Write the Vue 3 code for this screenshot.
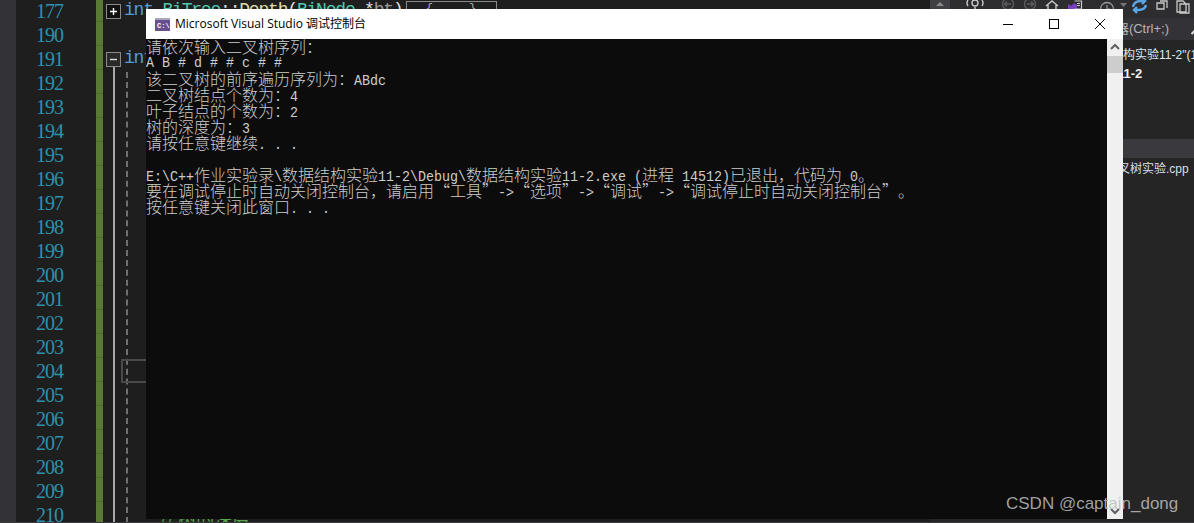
<script setup>
const numbers = [177, 190, 191, 192, 193, 194, 195, 196, 197, 198, 199, 200, 201, 202, 203, 204, 205, 206, 207, 208, 209, 210]

const code = [
  { text: 'int', cls: 'kw' },
  { text: ' ', cls: '' },
  { text: 'BiTree', cls: 'type' },
  { text: '::', cls: 'plain' },
  { text: 'Depth', cls: 'fn' },
  { text: '(', cls: 'plain' },
  { text: 'BiNode', cls: 'type' },
  { text: ' *', cls: 'plain' },
  { text: 'bt', cls: 'param' },
  { text: ')', cls: 'plain' }
]

const lines = [
  '请依次输入二叉树序列：',
  'A B # d # # c # #',
  '该二叉树的前序遍历序列为：ABdc',
  '二叉树结点个数为：4',
  '叶子结点的个数为：2',
  '树的深度为：3',
  '请按任意键继续. . .',
  '',
  'E:\\C++作业实验录\\数据结构实验11-2\\Debug\\数据结构实验11-2.exe (进程 14512)已退出，代码为 0。',
  '要在调试停止时自动关闭控制台，请启用“工具”->“选项”->“调试”->“调试停止时自动关闭控制台”。',
  '按任意键关闭此窗口. . .'
]

const split = (line) =>
  (line.match(/[\x00-\x7f]+|[^\x00-\x7f]+/g) || []).map((text) => ({
    text,
    latin: /^[\x00-\x7f]/.test(text)
  }))
</script>

<template>
  <div class="screen">
    <div class="rail"></div>

    <div class="editor">
      <div v-for="n in numbers" :key="n" class="row">
        <div class="num">{{ n }}</div>
        <div class="change"></div>
        <div class="code">
          <template v-if="n === 177">
            <span class="fold fold-open">
              <svg width="13" height="13" viewBox="0 0 13 13"><path d="M3 6.5h7M6.5 3v7" stroke="#fff" stroke-width="1.4" fill="none" /></svg>
            </span>
            <span class="source">
              <span v-for="(c, i) in code" :key="i" :class="c.cls">{{ c.text }}</span>
            </span>
            <span class="collapsed">{ ... }</span>
          </template>
          <template v-else-if="n === 191">
            <span class="fold fold-closed">
              <svg width="13" height="13" viewBox="0 0 13 13"><path d="M3 6.5h7" stroke="#ddd" stroke-width="1.4" fill="none" /></svg>
            </span>
            <span class="source"><span class="kw">int</span></span>
          </template>
          <template v-else-if="n === 210">
            <span class="comment">// 树的深度</span>
          </template>
        </div>
      </div>
      <div class="fold-line"></div>
      <div class="indent-line"></div>
      <div class="caret-box"></div>
    </div>

    <aside class="side">
      <div class="toolbar">
        <svg width="264" height="18" viewBox="0 0 264 18">
          <rect x="0" y="0" width="20" height="18" fill="#3f3f44" />
          <path d="M6 6l4-4 4 4z" fill="#8a8a8a" />
          <g fill="none" stroke="#c8c8c8" stroke-width="1.4">
            <circle cx="45" cy="3" r="3" />
            <path d="M38 0q-2 3 0 6M52 0q2 3 0 6M45-3v2M45 7v2" />
          </g>
          <g fill="none" stroke="#5c5c5c" stroke-width="1.4">
            <circle cx="78" cy="4" r="5.5" />
            <path d="M81 4h-6M77 1.5L74.500 4 77 6.500" />
            <circle cx="100" cy="4" r="5.500" />
            <path d="M97 4h6M101 1.500L103.500 4 101 6.500" />
          </g>
          <path d="M116 6l6-5 6 5M118 5v6M126 5v6" fill="none" stroke="#c8c8c8" stroke-width="1.400" />
          <path d="M138 9V4l3 2 3-3 3 2v4z" fill="#7a3fc0" />
          <path d="M144.500 1h7v8h-7" fill="none" stroke="#c8c8c8" stroke-width="1.200" />
          <path d="M147 3.500h3M147 5.500h3" stroke="#c8c8c8" />
          <circle cx="177" cy="9" r="6.500" fill="none" stroke="#999" stroke-width="1.300" />
          <path d="M177 5v4h3" fill="none" stroke="#999" stroke-width="1.200" />
          <path d="M190 3h7l-3.500 4z" fill="#777" />
          <path d="M203 7q1-6 8-6h3M212-2l3 3-3 3M216 5q-1 5-8 5h-4M207 7l-3 3 3 3" fill="none" stroke="#5aa7e8" stroke-width="2.400" />
          <path d="M230 1h7v7M227 3h7v6h-7z" fill="none" stroke="#c8c8c8" stroke-width="1.300" />
          <path d="M247 1h6l3 3v8h-9z M250 4h9v9h-9z" fill="none" stroke="#c8c8c8" stroke-width="1.300" />
        </svg>
      </div>
      <div class="search">
        <span class="search-text">搜索解决方案资源管理器(Ctrl+;)</span>
        <svg class="wrench" width="12" height="12" viewBox="0 0 12 12"><path d="M1.500 11L7 5.500M6 4l3-3 2 1-2 2 1 1 2-2" fill="none" stroke="#ddd" stroke-width="2" /></svg>
      </div>
      <div class="tree">
        <div class="tree-line solution">数据结构实验11-2"(1 个项目)</div>
        <div class="tree-line project">数据结构实验11-2</div>
        <div class="tree-band"></div>
        <div class="tree-line file">二叉树实验.cpp</div>
      </div>
    </aside>

    <section class="window">
      <header class="titlebar">
        <svg class="app-icon" width="15" height="13" viewBox="0 0 15 13">
          <rect width="15" height="13" fill="#68508f" />
          <rect width="15" height="2" fill="#a8a8b8" />
          <text x="2" y="10" font-size="7" fill="#fff" font-family="Liberation Mono, monospace" font-weight="700">C:\</text>
        </svg>
        <span class="title">Microsoft Visual Studio 调试控制台</span>
        <div class="controls">
          <button class="control">
            <svg width="10" height="10" viewBox="0 0 10 10"><path d="M0 5.500h10" stroke="#000" fill="none" /></svg>
          </button>
          <button class="control">
            <svg width="10" height="10" viewBox="0 0 10 10"><rect x=".5" y=".5" width="9" height="9" stroke="#000" fill="none" /></svg>
          </button>
          <button class="control">
            <svg width="10" height="10" viewBox="0 0 10 10"><path d="M0 0l10 10M10 0L0 10" stroke="#000" fill="none" /></svg>
          </button>
        </div>
      </header>
      <div class="client">
        <div class="console" lang="zh-CN">
          <div v-for="(line, i) in lines" :key="i" class="line">
            <span v-for="(part, j) in split(line)" :key="j" :class="part.latin ? 'latin' : 'cjk'">{{ part.text }}</span>
          </div>
        </div>
        <div class="scrollbar">
          <svg width="16" height="17" viewBox="0 0 16 17"><path d="M4 10l4-4 4 4" fill="none" stroke="#606060" stroke-width="2" /></svg>
          <div class="thumb"></div>
          <div class="track"></div>
          <svg width="16" height="17" viewBox="0 0 16 17"><path d="M4 7l4 4 4-4" fill="none" stroke="#606060" stroke-width="2" /></svg>
        </div>
      </div>
    </section>

    <div class="watermark">CSDN @captain_dong</div>
    <div class="bottom-strip"></div>
  </div>
</template>

<style>
html,
body {
  margin: 0;
  background: #1e1e1e;
}
</style>

<style scoped>
.screen {
  position: relative;
  display: flex;
  width: 1194px;
  height: 523px;
  overflow: hidden;
  background: #1e1e1e;
}

.rail {
  flex: 0 0 16px;
  background: #333337;
}

.editor {
  position: relative;
  flex: 0 0 914px;
  margin-top: -2px;
}

.row {
  display: flex;
  height: 24px;
}

.num {
  flex: 0 0 60px;
  padding-left: 20px;
  font: 20px/26px "Liberation Serif", serif;
  letter-spacing: -1px;
  color: #2b91af;
}

.change {
  flex: 0 0 7px;
  box-sizing: border-box;
  background: #5a7a33;
  border-bottom: 1px solid #4c6a2b;
}

.code {
  position: relative;
  flex: 1;
  display: flex;
  align-items: center;
  min-width: 0;
  white-space: pre;
  font: 18px/24px "Liberation Mono", monospace;
  letter-spacing: -1.2px;
}

.fold {
  flex: 0 0 13px;
  display: flex;
  height: 13px;
  margin: 2px 4px 0 4px;
  background: #111;
  outline: 1px solid #8a8a8a;
}

.fold-closed {
  background: #2a2a2a;
}

.source {
  color: #dcdcdc;
}

.kw {
  color: #569cd6;
}

.type {
  color: #4ec9b0;
}

.fn {
  color: #dcdcaa;
}

.param {
  color: #9a9a9a;
}

.plain {
  color: #dcdcdc;
}

.collapsed {
  box-sizing: border-box;
  align-self: flex-start;
  width: 91px;
  height: 18px;
  margin: 3px 0 0 3px;
  border: 1px solid #8a8a8a;
  font-size: 12px;
  line-height: 14px;
  letter-spacing: 0;
  text-align: center;
  color: #aaa;
}

.comment {
  margin-left: 57px;
  color: #57a64a;
  font: 18px/24px "Noto Sans CJK SC", sans-serif;
  letter-spacing: 0;
  transform: translateY(3px);
}

.fold-line {
  position: absolute;
  left: 97px;
  top: 69px;
  bottom: 0;
  width: 2px;
  background: #a8a8a8;
}

.indent-line {
  position: absolute;
  left: 110px;
  top: 74px;
  bottom: 0;
  width: 0;
  border-left: 2px dashed #707070;
}

.caret-box {
  position: absolute;
  left: 105px;
  top: 361px;
  width: 40px;
  height: 24px;
  box-sizing: border-box;
  border: 2px solid #4a4a4a;
}

.side {
  flex: 1;
  display: flex;
  flex-direction: column;
  min-width: 0;
  background: #252526;
  color: #d4d4d4;
  font: 13px/18px "Liberation Sans", "Noto Sans CJK SC", sans-serif;
}

.toolbar {
  flex: 0 0 18px;
  height: 18px;
  overflow: hidden;
  background: #2d2d30;
}

.toolbar svg {
  display: block;
}

.search {
  flex: 0 0 22px;
  display: flex;
  justify-content: flex-end;
  align-items: center;
  margin-bottom: 1px;
  background: #333337;
  white-space: nowrap;
  overflow: hidden;
  color: #b4b4b4;
  font-size: 13px;
}

.wrench {
  flex: none;
  margin-left: 21px;
  margin-right: -8px;
}

.tree {
  flex: 1;
  display: flex;
  flex-direction: column;
  min-height: 0;
}

.tree-line {
  white-space: nowrap;
  overflow: hidden;
}

.solution {
  margin-top: 5px;
  padding-left: 157px;
  font-size: 12px;
  color: #dfe9f2;
}

.project {
  margin-top: 1px;
  padding-left: 109px;
  font-weight: 700;
  color: #f0f0f0;
}

.tree-band {
  height: 19px;
  margin-top: 56px;
  background: #3a3a3e;
}

.file {
  margin-top: 2px;
  padding-left: 176px;
  font-size: 12px;
  color: #d8dfe6;
}

.window {
  position: absolute;
  left: 146px;
  top: 9px;
  width: 977px;
  height: 510px;
  display: flex;
  flex-direction: column;
}

.titlebar {
  flex: 0 0 30px;
  display: flex;
  align-items: center;
  background: #fff;
}

.app-icon {
  flex: none;
  margin-left: 9px;
}

.title {
  margin-left: 5px;
  font: 12px/16px "Open Sans", "Noto Sans CJK SC", sans-serif;
  color: #000;
}

.controls {
  display: flex;
  margin-left: auto;
}

.control {
  display: flex;
  align-items: center;
  justify-content: center;
  width: 46px;
  height: 30px;
  padding: 0;
  border: 0;
  background: none;
}

.client {
  flex: 1;
  display: flex;
  min-height: 0;
}

.console {
  flex: 1;
  min-width: 0;
  background: #0c0c0c;
  color: #cccccc;
  white-space: pre;
  text-spacing-trim: space-all;
  font-kerning: none;
}

.line {
  height: 16px;
  line-height: 16px;
  overflow: visible;
}

.line:first-child {
  margin-top: -1px;
}

.cjk {
  font: 16px/16px "Noto Sans CJK SC", sans-serif;
  font-weight: 300;
}

.latin {
  display: inline-block;
  font: 13.333px/16px "Liberation Mono", monospace;
  transform: scaleY(1.15);
  transform-origin: 0 80%;
}

.scrollbar {
  flex: 0 0 16px;
  display: flex;
  flex-direction: column;
  background: #f0f0f0;
}

.scrollbar svg {
  flex: none;
  display: block;
}

.thumb {
  flex: 0 0 17px;
  background: #cdcdcd;
}

.track {
  flex: 1;
}

.watermark {
  position: absolute;
  left: 1006px;
  top: 494px;
  font: 17px/19px "Liberation Sans", sans-serif;
  color: rgba(190, 190, 190, 0.85);
  white-space: nowrap;
}

.bottom-strip {
  position: absolute;
  left: 0;
  right: 0;
  bottom: 0;
  height: 1px;
  background: #3a3a3c;
}
</style>
